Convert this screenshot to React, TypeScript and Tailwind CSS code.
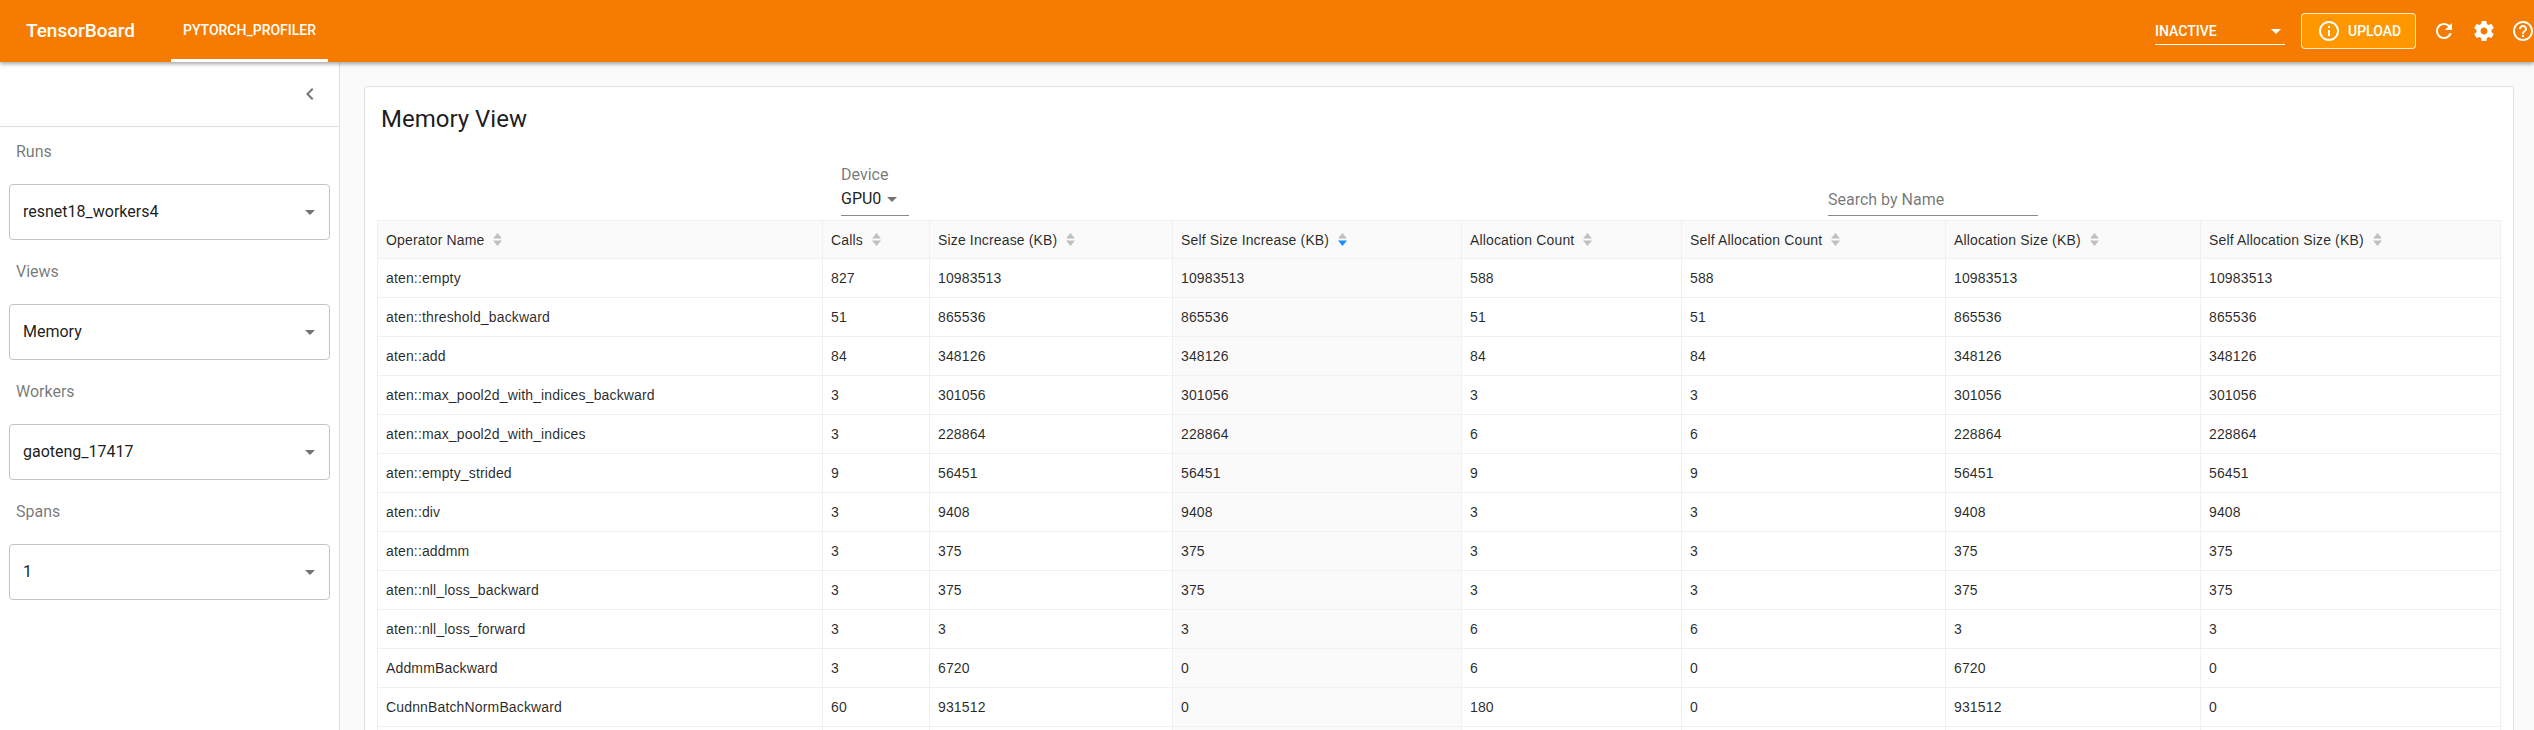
import React from "react";

const rows: (string | number)[][] = [
  ["aten::empty", 827, 10983513, 10983513, 588, 588, 10983513, 10983513],
  ["aten::threshold_backward", 51, 865536, 865536, 51, 51, 865536, 865536],
  ["aten::add", 84, 348126, 348126, 84, 84, 348126, 348126],
  ["aten::max_pool2d_with_indices_backward", 3, 301056, 301056, 3, 3, 301056, 301056],
  ["aten::max_pool2d_with_indices", 3, 228864, 228864, 6, 6, 228864, 228864],
  ["aten::empty_strided", 9, 56451, 56451, 9, 9, 56451, 56451],
  ["aten::div", 3, 9408, 9408, 3, 3, 9408, 9408],
  ["aten::addmm", 3, 375, 375, 3, 3, 375, 375],
  ["aten::nll_loss_backward", 3, 375, 375, 3, 3, 375, 375],
  ["aten::nll_loss_forward", 3, 3, 3, 6, 6, 3, 3],
  ["AddmmBackward", 3, 6720, 0, 6, 0, 6720, 0],
  ["CudnnBatchNormBackward", 60, 931512, 0, 180, 0, 931512, 0],
  ["\u00a0", "\u00a0", "\u00a0", "\u00a0", "\u00a0", "\u00a0", "\u00a0", "\u00a0"],
];

const columns = [
  "Operator Name",
  "Calls",
  "Size Increase (KB)",
  "Self Size Increase (KB)",
  "Allocation Count",
  "Self Allocation Count",
  "Allocation Size (KB)",
  "Self Allocation Size (KB)",
];

const widths = [446, 107, 243, 289, 220, 264, 255, 300];

function MaterialIcon({ d, className }: { d: string; className: string }) {
  return (
    <svg viewBox="0 0 24 24" fill="currentColor" className={className}>
      <path d={d} />
    </svg>
  );
}

const ARROW = "M7 10l5 5 5-5z";

function SortIcon({ active }: { active?: boolean }) {
  return (
    <svg viewBox="0 0 9 13" className="ml-[9px] inline-block h-[13px] w-[9px] shrink-0">
      <path d="M4.5 0L9 5.5H0z" fill="#bfbfbf" />
      <path d="M4.5 13L0 7.5h9z" fill={active ? "#1890ff" : "#bfbfbf"} />
    </svg>
  );
}

function SideSelect({ label, value }: { label: string; value: string }) {
  return (
    <div className="flex h-[120px] flex-col">
      <div className="flex h-[57px] items-center pl-4 pb-[7px] text-base text-black/55">{label}</div>
      <div className="mx-[9px] flex h-[56px] items-center justify-between rounded border border-[#c4c4c4] pl-[13px] pr-[7px] text-base text-black/90">
        <span>{value}</span>
        <MaterialIcon d={ARROW} className="h-6 w-6 text-black/55" />
      </div>
    </div>
  );
}

export default function App() {
  return (
    <div className="flex h-[730px] w-full flex-col overflow-hidden bg-[#fafafa] font-['Roboto',sans-serif]">
      <header className="relative z-10 flex h-[62px] shrink-0 items-center bg-[#f57c00] text-white shadow-[0_2px_4px_rgba(0,0,0,0.35)]">
        <div className="ml-[26px] mr-9 text-[19px] font-medium">TensorBoard</div>
        <div className="flex h-full w-[157px] items-center justify-center border-b-[3px] border-white pt-[1px] text-sm font-medium">
          PYTORCH_PROFILER
        </div>
        <div className="ml-auto -mr-[9px] flex shrink-0 items-center">
          <div className="relative flex h-[28px] w-[130px] items-center justify-between border-b border-white text-sm font-medium">
            <span>INACTIVE</span>
            <MaterialIcon d={ARROW} className="-mr-[3px] h-6 w-6" />
          </div>
          <div className="ml-4 flex h-[36px] w-[115px] items-center rounded border border-white/80 bg-[#ff9800] pl-[17px] text-sm font-medium">
            <MaterialIcon
              d="M11 7h2v2h-2zm0 4h2v6h-2zm1-9C6.48 2 2 6.48 2 12s4.48 10 10 10 10-4.48 10-10S17.52 2 12 2zm0 18c-4.41 0-8-3.59-8-8s3.59-8 8-8 8 3.59 8 8-3.59 8-8 8z"
              className="-ml-[2px] h-6 w-6 shrink-0"
            />
            <span className="ml-[7px]">UPLOAD</span>
          </div>
          <div className="ml-2 flex items-center">
            <div className="flex h-10 w-10 items-center justify-center">
              <MaterialIcon
                d="M17.65 6.35C16.2 4.9 14.21 4 12 4c-4.42 0-7.99 3.58-7.99 8s3.57 8 7.99 8c3.73 0 6.84-2.55 7.73-6h-2.08c-.82 2.33-3.04 4-5.65 4-3.31 0-6-2.69-6-6s2.69-6 6-6c1.66 0 3.14.69 4.22 1.78L13 11h7V4l-2.35 2.35z"
                className="h-6 w-6"
              />
            </div>
            <div className="flex h-10 w-10 items-center justify-center">
              <MaterialIcon
                d="M19.43 12.98c.04-.32.07-.64.07-.98s-.03-.66-.07-.98l2.11-1.65c.19-.15.24-.42.12-.64l-2-3.46c-.12-.22-.39-.3-.61-.22l-2.49 1c-.52-.4-1.08-.73-1.69-.98l-.38-2.65C14.46 2.18 14.25 2 14 2h-4c-.25 0-.46.18-.49.42l-.38 2.65c-.61.25-1.17.59-1.69.98l-2.49-1c-.23-.09-.49 0-.61.22l-2 3.46c-.13.22-.07.49.12.64l2.11 1.65c-.04.32-.07.65-.07.98s.03.66.07.98l-2.11 1.65c-.19.15-.24.42-.12.64l2 3.46c.12.22.39.3.61.22l2.49-1c.52.4 1.08.73 1.69.98l.38 2.65c.03.24.24.42.49.42h4c.25 0 .46-.18.49-.42l.38-2.65c.61-.25 1.17-.59 1.69-.98l2.49 1c.23.09.49 0 .61-.22l2-3.46c.12-.22.07-.49-.12-.64l-2.11-1.65zM12 15.5c-1.93 0-3.5-1.57-3.5-3.5s1.57-3.5 3.5-3.5 3.5 1.57 3.5 3.5-1.57 3.5-3.5 3.5z"
                className="h-6 w-6"
              />
            </div>
            <div className="-ml-[1px] flex h-10 w-10 items-center justify-center">
              <MaterialIcon
                d="M11 18h2v-2h-2v2zm1-16C6.48 2 2 6.48 2 12s4.48 10 10 10 10-4.48 10-10S17.52 2 12 2zm0 18c-4.41 0-8-3.59-8-8s3.59-8 8-8 8 3.59 8 8-3.59 8-8 8zm0-14c-2.21 0-4 1.79-4 4h2c0-1.1.9-2 2-2s2 .9 2 2c0 2-3 1.75-3 5h2c0-2.25 3-2.5 3-5 0-2.21-1.79-4-4-4z"
                className="h-6 w-6"
              />
            </div>
          </div>
        </div>
      </header>

      <div className="flex min-h-0 flex-1">
        <aside className="w-[340px] shrink-0 border-r border-[#e0e0e0] bg-white">
          <div className="flex h-[65px] items-center justify-end border-b border-[#e0e0e0] pr-[17px]">
            <MaterialIcon d="M15.41 7.41L14 6l-6 6 6 6 1.41-1.41L10.83 12z" className="h-6 w-6 text-black/55" />
          </div>
          <SideSelect label="Runs" value="resnet18_workers4" />
          <SideSelect label="Views" value="Memory" />
          <SideSelect label="Workers" value="gaoteng_17417" />
          <SideSelect label="Spans" value="1" />
        </aside>

        <main className="min-w-0 flex-1 overflow-hidden pt-[24px] pl-[24px] pr-5">
          <div className="rounded border border-[#e0e0e0] bg-white px-[12px] pt-4">
            <h1 className="ml-[4px] h-8 text-2xl leading-8 font-normal text-black/90">Memory View</h1>
            <div className="flex h-[85px] items-end pb-[4px] pl-[464px] text-base">
              <div className="w-[68px] shrink-0 border-b border-[#8a8a8a]">
                <div className="-mb-1 text-black/55">Device</div>
                <div className="flex h-[32px] items-center text-black/90">
                  GPU0
                  <MaterialIcon d={ARROW} className="-ml-[1px] h-6 w-6 text-black/55" />
                </div>
              </div>
              <div className="ml-[919px] flex h-[32px] w-[210px] shrink-0 items-center border-b border-[#8a8a8a] text-black/55">
                Search by Name
              </div>
            </div>
            <table className="w-[2124px] table-fixed border-separate border-spacing-0 font-['Liberation_Sans',sans-serif] text-sm tracking-[0.15px] text-black/85">
              <colgroup>
                {widths.map((w, i) => (
                  <col key={i} style={{ width: w }} />
                ))}
              </colgroup>
              <thead>
                <tr>
                  {columns.map((c, i) => (
                    <th
                      key={c}
                      className={`h-[39px] border-y border-r border-[#f0f0f0] bg-[#fafafa] px-2 text-left font-normal ${i === 0 ? "border-l" : ""}`}
                    >
                      <span className="flex items-center">
                        {c}
                        <SortIcon active={i === 3} />
                      </span>
                    </th>
                  ))}
                </tr>
              </thead>
              <tbody>
                {rows.map((r, ri) => (
                  <tr key={ri}>
                    {r.map((v, i) => (
                      <td
                        key={i}
                        className={`h-[39px] border-r border-b border-[#f0f0f0] px-2 ${i === 0 ? "border-l" : ""} ${i === 3 ? "bg-[#fafafa]" : ""}`}
                      >
                        {v}
                      </td>
                    ))}
                  </tr>
                ))}
              </tbody>
            </table>
          </div>
        </main>
      </div>
    </div>
  );
}
